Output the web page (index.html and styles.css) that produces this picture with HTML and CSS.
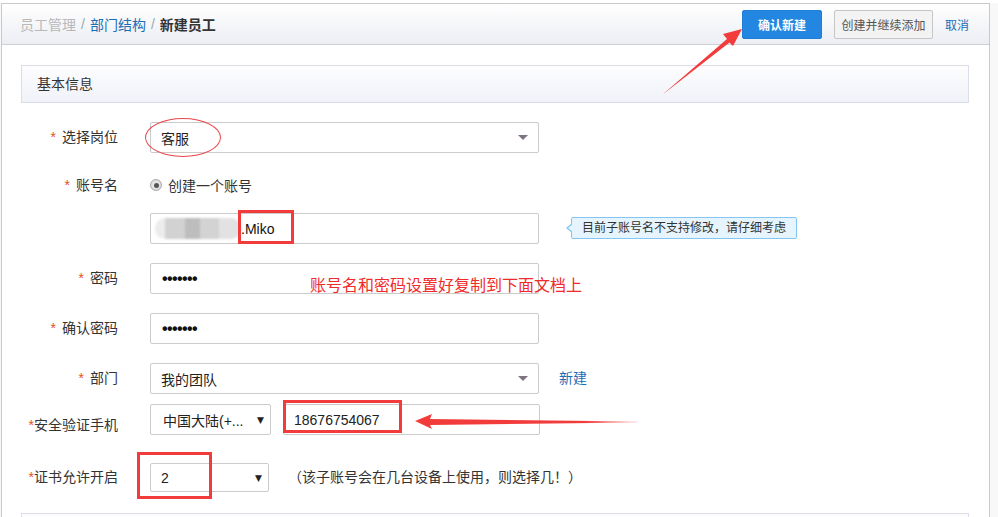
FILE: index.html
```html
<!DOCTYPE html>
<html lang="zh-CN">
<head>
<meta charset="utf-8">
<title>新建员工</title>
<link rel="stylesheet" href="styles.css">
</head>
<body>
<div class="page">
  <div class="panel">
    <div class="topbar">
      <div class="crumbs">
        <span class="c-muted">员工管理</span><span class="sep">/</span><a class="c-link">部门结构</a><span class="sep">/</span><span class="c-cur">新建员工</span>
      </div>
      <div class="actions">
        <button class="btn btn-primary">确认新建</button>
        <button class="btn btn-default">创建并继续添加</button>
        <a class="cancel">取消</a>
      </div>
    </div>
    <div class="content">
      <div class="section-title">基本信息</div>
      <div class="form">
        <div class="row r50">
          <div class="label"><span class="star sp">*</span>选择岗位</div>
          <div class="field select"><span>客服</span><span class="caret-gray"></span></div>
        </div>
        <div class="row r41">
          <div class="label lh26"><span class="star sp">*</span>账号名</div>
          <div class="radio-line"><span class="radio"><span class="dot"></span></span><span>创建一个账号</span></div>
        </div>
        <div class="row r50">
          <div class="label"></div>
          <div class="field name"><span class="blurred"></span><span class="miko">.Miko</span></div>
          <div class="tip">目前子账号名不支持修改，请仔细考虑</div>
        </div>
        <div class="row r50">
          <div class="label"><span class="star sp">*</span>密码</div>
          <div class="field pwd"><span class="dots">•••••••</span></div>
        </div>
        <div class="row r50">
          <div class="label"><span class="star sp">*</span>确认密码</div>
          <div class="field pwd"><span class="dots">•••••••</span></div>
        </div>
        <div class="row r41">
          <div class="label"><span class="star sp">*</span>部门</div>
          <div class="field select"><span>我的团队</span><span class="caret-gray"></span></div>
          <a class="new-link">新建</a>
        </div>
        <div class="row r59">
          <div class="label low"><span class="star">*</span>安全验证手机</div>
          <div class="field country"><span>中国大陆(+...</span><span class="caret-black">▼</span></div>
          <div class="field phone"><span>18676754067</span></div>
        </div>
        <div class="row r50">
          <div class="label lh29"><span class="star">*</span>证书允许开启</div>
          <div class="field cert"><span>2</span><span class="caret-black">▼</span></div>
          <div class="hint">（该子账号会在几台设备上使用，则选择几！）</div>
        </div>
      </div>
      <div class="section-title next"></div>
    </div>
  </div>

  <div class="mark ellipse"></div>
  <div class="mark box box-name"></div>
  <div class="mark box box-phone"></div>
  <div class="mark box box-cert"></div>
  <div class="note">账号名和密码设置好复制到下面文档上</div>
  <svg class="arrows" width="998" height="517" viewBox="0 0 998 517">
    <defs>
      <linearGradient id="fade" x1="415" y1="0" x2="640" y2="0" gradientUnits="userSpaceOnUse">
        <stop offset="0" stop-color="#f23c3c"/>
        <stop offset="0.75" stop-color="#f23c3c"/>
        <stop offset="1" stop-color="#f23c3c" stop-opacity="0.15"/>
      </linearGradient>
    </defs>
    <polygon fill="#f23c3c" points="662,95 727,39 723,34 742,29 733,46 729.5,42.5"/>
    <polygon fill="url(#fade)" points="415,421 432,414 430,419 638,421.5 638,422.5 430,425 432,429"/>
  </svg>
</div>
</body>
</html>
```

FILE: styles.css
```css
* { box-sizing: border-box; }
html, body { margin: 0; padding: 0; }
body {
  background: #f8f8f8;
  font-family: "Liberation Sans", "Noto Sans CJK SC", sans-serif;
  font-size: 14px;
  color: #333;
  overflow: hidden;
}
.page {
  position: relative;
  width: 998px;
  height: 517px;
  overflow: hidden;
  background: linear-gradient(#fff 0 3px, transparent 3px);
}
.panel {
  margin: 3px 0 0 1px;
  width: 989px;
  height: 514px;
  overflow: hidden;
  border: 1px solid #c9c9c9;
  border-bottom: none;
  background: #fff;
}
.topbar {
  height: 41px;
  border-bottom: 1px solid #cfd0d4;
  background: linear-gradient(#ffffff, #eceef4);
  display: flex;
  align-items: center;
  justify-content: space-between;
  padding: 0 20px 0 18px;
}
.crumbs { font-size: 14px; display: flex; align-items: center; }
.c-muted { color: #b8b8b8; }
.sep { color: #9aa; margin: 0 5px; }
.c-link { color: #1d6db5; }
.c-cur { color: #333; font-weight: bold; }
.actions { display: flex; align-items: center; padding-top: 1px; }
.btn {
  font-family: inherit;
  font-size: 12px;
  height: 29px;
  border-radius: 2px;
  padding: 0;
  margin-right: 12px;
}
.btn-primary {
  width: 80px;
  background: #2386e0;
  border: 1px solid #1f7fd6;
  color: #fff;
  font-weight: bold;
}
.btn-default {
  width: 99px;
  background: #f3f3f3;
  border: 1px solid #c6c6c6;
  color: #555;
}
.cancel { color: #1d6db5; font-size: 12px; }
.content { padding: 20px 20px 0 19px; }
.section-title {
  height: 38px;
  border: 1px solid #dcdde6;
  background: linear-gradient(#fdfdfe, #f0f2f9);
  padding-left: 15px;
  line-height: 36px;
  font-size: 14px;
  color: #333;
}
.form { margin-top: 19px; }
.row { display: flex; align-items: flex-start; }
.r50 { height: 50px; }
.r41 { height: 41px; }
.r59 { height: 59px; }
.label {
  flex: none;
  width: 97px;
  margin-right: 32px;
  text-align: right;
  line-height: 31px;
  font-size: 14px;
  color: #333;
  white-space: nowrap;
}
.label.lh26 { line-height: 26px; }
.label.lh29 { line-height: 29px; }
.label.low { padding-top: 6px; }
.star { color: #e5501c; }
.star.sp { margin-right: 6px; }
.field {
  flex: none;
  width: 389px;
  height: 31px;
  border: 1px solid #cbcbcb;
  border-radius: 2px;
  background: #fff;
  display: flex;
  align-items: center;
  padding: 0 10px;
  font-size: 14px;
  color: #222;
}
.select { justify-content: space-between; }
.caret-gray {
  width: 0; height: 0;
  border-left: 5px solid transparent;
  border-right: 5px solid transparent;
  border-top: 5px solid #7d7383;
}
.radio-line { height: 26px; display: flex; align-items: center; font-size: 14px; color: #333; }
.radio {
  width: 12px; height: 12px;
  border-radius: 50%;
  border: 1px solid #a8a8a8;
  background: radial-gradient(#eee, #d6d6d6);
  display: flex; align-items: center; justify-content: center;
  margin-right: 6px;
}
.radio .dot { width: 5px; height: 5px; border-radius: 50%; background: #555; }
.field.name { padding-left: 4px; }
.blurred {
  display: inline-block;
  width: 86px; height: 21px;
  border-radius: 10px;
  background: linear-gradient(90deg, #ececec 0 12%, #d2d2d2 12% 35%, #bdbdbd 35% 52%, #d3d3d3 52% 75%, #e2e2e2 75%);
  filter: blur(1.2px);
}
.miko { color: #111; }
.tip {
  position: relative;
  margin: 4px 0 0 32px;
  height: 22px;
  padding: 0 10px;
  background: #e6f4fd;
  border: 1px solid #85c6f1;
  border-radius: 2px;
  font-size: 12px;
  line-height: 20px;
  color: #333;
  white-space: nowrap;
}
.tip::before {
  content: "";
  position: absolute;
  left: -6px; top: 5px;
  border-top: 5px solid transparent;
  border-bottom: 5px solid transparent;
  border-right: 6px solid #85c6f1;
}
.tip::after {
  content: "";
  position: absolute;
  left: -4px; top: 6px;
  border-top: 4px solid transparent;
  border-bottom: 4px solid transparent;
  border-right: 5px solid #e6f4fd;
}
.pwd { padding-left: 11px; }
.dots { font-size: 16px; font-weight: bold; color: #111; letter-spacing: -0.6px; }
.new-link { margin-left: 20px; line-height: 31px; color: #1d6db5; font-size: 14px; }
.country { width: 121px; padding: 0 6px 0 12px; justify-content: space-between; color: #222; }
.caret-black { font-family: "DejaVu Sans", sans-serif; font-size: 9px; color: #222; }
.phone { width: 257px; margin-left: 12px; padding-left: 10px; color: #222; }
.cert { width: 119px; height: 29px; padding: 0 6px 0 10px; justify-content: space-between; }
.hint { margin-left: 19px; line-height: 29px; font-size: 14px; color: #333; white-space: nowrap; }

.mark { position: absolute; pointer-events: none; }
.ellipse { left: 145px; top: 118px; width: 76px; height: 39px; border: 1px solid #e8474b; border-radius: 50%; }
.box { border: 3px solid #f23c3c; }
.box-name { left: 238px; top: 210px; width: 56px; height: 34px; }
.box-phone { left: 283px; top: 400px; width: 119px; height: 33px; }
.box-cert { left: 137px; top: 452px; width: 75px; height: 47px; }
.note {
  position: absolute;
  left: 310px; top: 275px;
  font-size: 16px;
  line-height: 22px;
  color: #f22a2a;
  white-space: nowrap;
}
.arrows { position: absolute; left: 0; top: 0; pointer-events: none; }
```
